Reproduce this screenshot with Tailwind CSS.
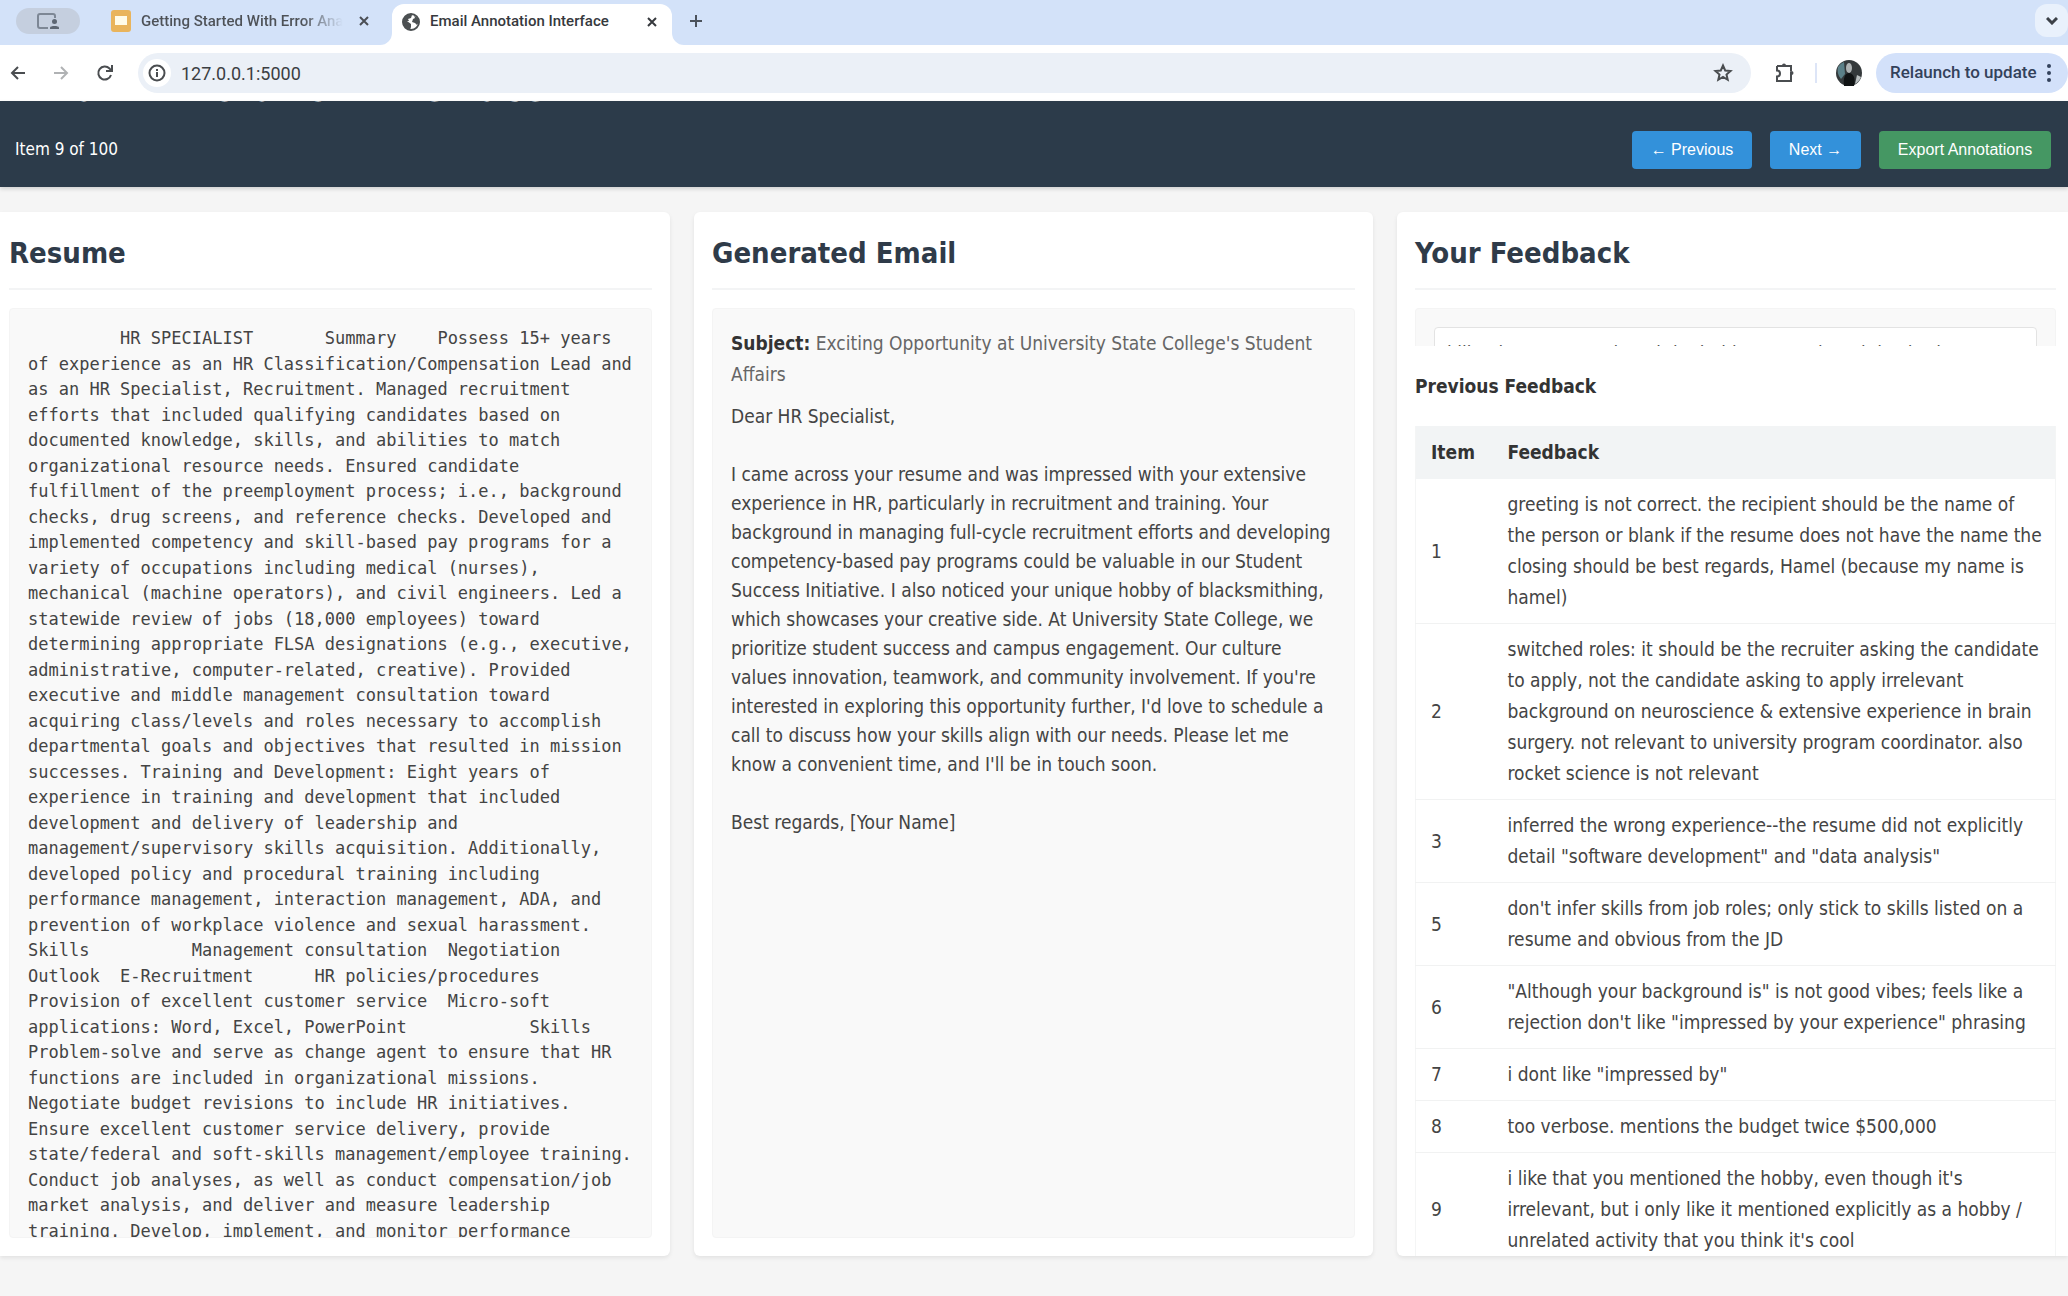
<!DOCTYPE html>
<html lang="en">
<head>
<meta charset="utf-8">
<title>Email Annotation Interface</title>
<script src="https://cdn.jsdelivr.net/npm/@tailwindcss/browser@4"></script>
</head>
<body class="flex h-screen flex-col overflow-hidden bg-[#f5f5f5] font-['DejaVu_Sans_Condensed','Noto_Sans',sans-serif] text-[19px] text-[#444]">

<!-- Browser tabs -->
<nav aria-label="Tabs" class="flex h-[45px] shrink-0 bg-[#d3e2f9] pl-4 font-[Roboto,sans-serif] text-[15px] font-medium text-[#45494f]">
  <button aria-label="Tab groups" class="mt-2 flex h-[26px] w-16 items-center justify-center rounded-full bg-[#c5cfdf]">
    <svg width="24" height="18" viewBox="0 0 24 18" fill="none" stroke="#7d8795" stroke-width="2"><path d="M12 16H4a2 2 0 0 1-2-2V4a2 2 0 0 1 2-2h13a2 2 0 0 1 2 2v2"/><circle cx="18.500" cy="9.500" r="2.500" fill="#5d6673" stroke="none"/><path d="M14 17v-1.500c0-2 9-2 9 0V17z" fill="#5d6673" stroke="none"/></svg>
  </button>
  <div class="ml-[31px] flex h-[42px] w-[269px] items-center">
    <svg class="shrink-0" width="20" height="22" viewBox="0 0 20 22"><rect width="20" height="22" rx="3" fill="#e9b45c"/><rect x="4" y="6" width="12" height="9" fill="#fffbe8"/></svg>
    <a href="#" class="ml-[10px] w-[202px] overflow-hidden bg-linear-to-r from-[#4d5157] from-80% to-transparent bg-clip-text whitespace-nowrap text-transparent">Getting Started With Error Analysis</a>
    <button aria-label="Close tab" class="ml-[14px]"><svg width="14" height="14" viewBox="0 0 14 14" stroke="#4b4f55" stroke-width="2"><path d="M3 3l8 8M11 3l-8 8"/></svg></button>
  </div>
  <svg class="mt-[33px] shrink-0" width="12" height="12" viewBox="0 0 12 12" fill="#fff"><path d="M12 0v12H0A12 12 0 0 0 12 0z"/></svg>
  <div class="mt-1 flex w-[280px] items-center rounded-t-xl bg-white pr-3 pb-[6px] pl-[10px] text-[#36393d]">
    <svg class="shrink-0" width="18" height="18" viewBox="0 0 18 18"><circle cx="9" cy="9" r="8" fill="#fff" stroke="#4c5052" stroke-width="2"/><path d="M1 9c0-4 3-7 6-8l3 1-1 3-3 1 1 2H5l4 3v3l-1 3C4 17 1 13 1 9zM12 3l4 2 1 4-2 3-2-2-3-1 1-3 2-1z" fill="#4c5052"/></svg>
    <a href="#" class="ml-[10px]">Email Annotation Interface</a>
    <button aria-label="Close tab" class="ml-auto"><svg width="16" height="16" viewBox="0 0 16 16" stroke="#36393d" stroke-width="2"><path d="M4 4l8 8M12 4l-8 8"/></svg></button>
  </div>
  <svg class="mt-[33px] shrink-0" width="12" height="12" viewBox="0 0 12 12" fill="#fff"><path d="M0 0v12h12A12 12 0 0 1 0 0z"/></svg>
  <button aria-label="New tab" class="ml-[4px] h-[42px]"><svg width="16" height="16" viewBox="0 0 16 16" stroke="#4b525c" stroke-width="2"><path d="M8 2v12M2 8h12"/></svg></button>
  <button aria-label="Search tabs" class="mt-1 ml-auto flex h-[33px] w-[33px] items-center justify-center rounded-xl bg-[#e9f1fc]"><svg width="12" height="8" viewBox="0 0 12 8" fill="none" stroke="#3c4148" stroke-width="3"><path d="M1 1l5 5 5-5"/></svg></button>
</nav>

<!-- Address bar -->
<div class="flex h-14 shrink-0 items-center bg-white pl-[9px] font-[Roboto,sans-serif]">
  <button aria-label="Back"><svg width="18" height="18" viewBox="0 0 18 18" fill="none" stroke="#4a4d50" stroke-width="2"><path d="M16 9H3M9 3L3 9l6 6"/></svg></button>
  <button aria-label="Forward" class="ml-[25px]"><svg width="18" height="18" viewBox="0 0 18 18" fill="none" stroke="#b0b2b4" stroke-width="2"><path d="M2 9h13M9 3l6 6-6 6"/></svg></button>
  <button aria-label="Reload" class="ml-[26px]"><svg width="18" height="18" viewBox="0 0 18 18" fill="none" stroke="#4a4d50" stroke-width="2"><path d="M15 11a6.500 6.500 0 1 1-1.500-6.500L15.500 7"/><path d="M16 1v6h-6" /></svg></button>
  <form class="ml-6 flex h-10 flex-1 items-center rounded-full bg-[#ebf0f7] pr-[18px] pl-[5px]">
    <span class="flex h-7 w-7 items-center justify-center rounded-full bg-white"><svg width="18" height="18" viewBox="0 0 18 18" fill="none" stroke="#4a4d50" stroke-width="2"><circle cx="9" cy="9" r="7.500"/><path d="M9 8v5M9 5v2"/></svg></span>
    <input aria-label="Address" value="127.0.0.1:5000" class="ml-[10px] flex-1 bg-transparent text-[18px] text-[#3b3e42] outline-none">
    <button type="button" aria-label="Bookmark"><svg width="20" height="20" viewBox="0 0 20 20" fill="none" stroke="#4a4d50" stroke-width="2"><path d="M10 2.500l2.200 5 5.300.5-4 3.500 1.200 5.300L10 14l-4.700 2.800 1.200-5.300-4-3.500 5.300-.5z"/></svg></button>
  </form>
  <button aria-label="Extensions" class="ml-[23px]"><svg width="22" height="22" viewBox="0 0 22 22" fill="none" stroke="#4a4d50" stroke-width="2"><path d="M3 4h14v5.500M17 13v6H3v-4.500c4 0 4-6 0-6V4"/><path d="M17 9.500V13"/><path d="M8 3.500a2 2 0 0 1 4 0zM17.500 9a2 2 0 0 1 0 4z" fill="#4a4d50" stroke="none"/></svg></button>
  <span class="ml-[19px] h-5 w-[2px] bg-[#dde5f7]"></span>
  <button aria-label="Profile" class="ml-[19px]"><svg width="26" height="26" viewBox="0 0 26 26"><circle cx="13" cy="13" r="13" fill="#34393b"/><path d="M2 7a13 13 0 0 1 6-5l1 12-4 5a13 13 0 0 1-3-12z" fill="#5b8088"/><path d="M21 15l4 2a13 13 0 0 1-6 7z" fill="#b9bfc0"/><ellipse cx="13" cy="8" rx="3" ry="5" fill="#aeb3b4"/><path d="M8 26c-1-8 1-13 5-13s7 5 5 13z" fill="#101314"/></svg></button>
  <button class="ml-[14px] flex h-10 w-[192px] items-center justify-between rounded-full bg-[#d3e1fa] pr-[17px] pl-[14px] text-[17px] font-medium text-[#33425b]">Relaunch to update
    <svg width="4" height="18" viewBox="0 0 4 18" fill="#33425b"><circle cx="2" cy="2" r="2"/><circle cx="2" cy="9" r="2"/><circle cx="2" cy="16" r="2"/></svg>
  </button>
</div>

<!-- Application header, scrolled so that only the foot of the title shows -->
<header class="h-[86px] shrink-0 overflow-hidden bg-[#2c3b4a] pr-[17px] pl-[15px] text-white shadow-[0_2px_4px_rgba(0,0,0,0.15)]">
  <h1 class="-mt-[33px] text-[39px] leading-10 font-bold">Email Annotation Interface</h1>
  <div class="mt-[23px] flex items-center justify-between">
    <p class="text-[17px]">Item 9 of 100</p>
    <div class="flex gap-[18px] font-['Liberation_Sans',sans-serif] text-base">
      <button class="h-[38px] w-[120px] rounded bg-[#3391da]">← Previous</button>
      <button class="h-[38px] w-[91px] rounded bg-[#3391da]">Next →</button>
      <button class="h-[38px] w-[172px] rounded bg-[#459763]">Export Annotations</button>
    </div>
  </div>
</header>

<main class="grid min-h-0 flex-1 grid-cols-[670fr_679fr_671fr] gap-6 pt-[25px] pb-10">

  <section class="flex min-h-0 min-w-0 flex-col rounded-r-md bg-white pr-[18px] pb-[18px] pl-[9px] shadow-[0_2px_4px_rgba(0,0,0,0.08)]">
    <h2 class="border-b-2 border-[#f3f4f5] pt-[21px] pb-[14px] text-[29px] leading-[41px] font-bold text-[#2f3b49]">Resume</h2>
    <pre class="mt-[18px] min-h-0 flex-1 overflow-hidden rounded border border-[#f4f4f4] bg-[#f9f9f9] px-[18px] py-[17px] font-['DejaVu_Sans_Mono',monospace] text-[17px] leading-normal">         HR SPECIALIST       Summary    Possess 15+ years
of experience as an HR Classification/Compensation Lead and
as an HR Specialist, Recruitment. Managed recruitment
efforts that included qualifying candidates based on
documented knowledge, skills, and abilities to match
organizational resource needs. Ensured candidate
fulfillment of the preemployment process; i.e., background
checks, drug screens, and reference checks. Developed and
implemented competency and skill-based pay programs for a
variety of occupations including medical (nurses),
mechanical (machine operators), and civil engineers. Led a
statewide review of jobs (18,000 employees) toward
determining appropriate FLSA designations (e.g., executive,
administrative, computer-related, creative). Provided
executive and middle management consultation toward
acquiring class/levels and roles necessary to accomplish
departmental goals and objectives that resulted in mission
successes. Training and Development: Eight years of
experience in training and development that included
development and delivery of leadership and
management/supervisory skills acquisition. Additionally,
developed policy and procedural training including
performance management, interaction management, ADA, and
prevention of workplace violence and sexual harassment.
Skills          Management consultation  Negotiation
Outlook  E-Recruitment      HR policies/procedures
Provision of excellent customer service  Micro-soft
applications: Word, Excel, PowerPoint            Skills
Problem-solve and serve as change agent to ensure that HR
functions are included in organizational missions.
Negotiate budget revisions to include HR initiatives.
Ensure excellent customer service delivery, provide
state/federal and soft-skills management/employee training.
Conduct job analyses, as well as conduct compensation/job
market analysis, and deliver and measure leadership
training. Develop, implement, and monitor performance</pre>
  </section>

  <section class="flex min-h-0 min-w-0 flex-col rounded-md bg-white px-[18px] pb-[18px] shadow-[0_2px_4px_rgba(0,0,0,0.08)]">
    <h2 class="border-b-2 border-[#f3f4f5] pt-[21px] pb-[14px] text-[29px] leading-[41px] font-bold text-[#2f3b49]">Generated Email</h2>
    <div class="mt-[18px] min-h-0 flex-1 overflow-hidden rounded border border-[#f4f4f4] bg-[#f9f9f9] px-[18px] pt-[19px]">
      <p class="leading-[31px] whitespace-pre-line text-[#666]"><strong class="text-[#333]">Subject:</strong> Exciting Opportunity at University State College's Student
Affairs</p>
      <div class="mt-3 leading-[29px] whitespace-pre-line">Dear HR Specialist,

I came across your resume and was impressed with your extensive
experience in HR, particularly in recruitment and training. Your
background in managing full-cycle recruitment efforts and developing
competency-based pay programs could be valuable in our Student
Success Initiative. I also noticed your unique hobby of blacksmithing,
which showcases your creative side. At University State College, we
prioritize student success and campus engagement. Our culture
values innovation, teamwork, and community involvement. If you're
interested in exploring this opportunity further, I'd love to schedule a
call to discuss how your skills align with our needs. Please let me
know a convenient time, and I'll be in touch soon.

Best regards, [Your Name]</div>
    </div>
  </section>

  <section class="flex min-h-0 min-w-0 flex-col overflow-hidden rounded-l-md bg-white pr-3 pl-[18px] shadow-[0_2px_4px_rgba(0,0,0,0.08)]">
    <h2 class="border-b-2 border-[#f3f4f5] pt-[21px] pb-[14px] text-[29px] leading-[41px] font-bold text-[#2f3b49]">Your Feedback</h2>
    <div class="mt-[18px] h-[38px] shrink-0 overflow-hidden rounded-t border border-b-0 border-[#f4f4f4] bg-[#f9f9f9] px-[18px] pt-[18px]">
      <textarea aria-label="Your feedback" class="block h-40 w-full resize-none overflow-hidden rounded border border-[#e3e3e3] bg-white px-3 py-[13px] leading-[25px] text-[#555]">i like that you mentioned the hobby, even though it's irrelevant, but i only like it mentioned explicitly as a hobby / unrelated activity that you think it's cool</textarea>
    </div>
    <h3 class="mt-6 leading-8 font-bold text-[#333]">Previous Feedback</h3>
    <table class="mt-6 w-full border-collapse border-x border-[#f4f5f5] text-left leading-[31px]">
      <thead class="bg-[#f2f4f5] text-[#333]"><tr><th class="w-[77px] py-[11px] pl-[15px]">Item</th><th class="py-[11px] pl-[15px]">Feedback</th></tr></thead>
      <tbody class="[&_td]:border-b [&_td]:border-[#f1f2f2] [&_td]:pt-[10px] [&_td]:pb-[10px] [&_td]:pl-[15px] [&_td]:whitespace-pre-line">
        <tr><td>1</td><td>greeting is not correct. the recipient should be the name of
the person or blank if the resume does not have the name the
closing should be best regards, Hamel (because my name is
hamel)</td></tr>
        <tr><td>2</td><td>switched roles: it should be the recruiter asking the candidate
to apply, not the candidate asking to apply irrelevant
background on neuroscience &amp; extensive experience in brain
surgery. not relevant to university program coordinator. also
rocket science is not relevant</td></tr>
        <tr><td>3</td><td>inferred the wrong experience--the resume did not explicitly
detail "software development" and "data analysis"</td></tr>
        <tr><td>5</td><td>don't infer skills from job roles; only stick to skills listed on a
resume and obvious from the JD</td></tr>
        <tr><td>6</td><td>"Although your background is" is not good vibes; feels like a
rejection don't like "impressed by your experience" phrasing</td></tr>
        <tr><td>7</td><td>i dont like "impressed by"</td></tr>
        <tr><td>8</td><td>too verbose. mentions the budget twice $500,000</td></tr>
        <tr><td>9</td><td>i like that you mentioned the hobby, even though it's
irrelevant, but i only like it mentioned explicitly as a hobby /
unrelated activity that you think it's cool</td></tr>
      </tbody>
    </table>
  </section>
</main>
</body>
</html>
